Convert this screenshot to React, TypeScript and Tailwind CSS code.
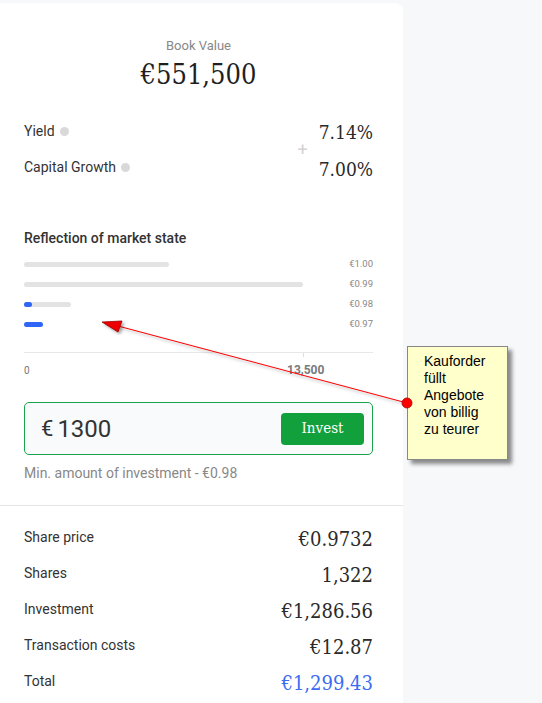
import React from 'react';

const slab = 'font-["DejaVu_Serif_Condensed","DejaVu_Serif",serif]';

const levels = [
  { price: '€1.00', track: 145, fill: 0 },
  { price: '€0.99', track: 279, fill: 0 },
  { price: '€0.98', track: 47, fill: 8 },
  { price: '€0.97', track: 0, fill: 19 },
];

const summary = [
  { label: 'Share price', value: '€0.9732' },
  { label: 'Shares', value: '1,322' },
  { label: 'Investment', value: '€1,286.56' },
  { label: 'Transaction costs', value: '€12.87' },
  { label: 'Total', value: '€1,299.43', blue: true },
];

function Dot() {
  return <span className="ml-[5px] inline-block h-[9px] w-[9px] rounded-full bg-[#d9d9d9]" />;
}

export default function App() {
  return (
    <div className='relative min-h-screen bg-[#f7f8fa] pt-[3px] font-["Roboto",sans-serif] text-[#222]'>
      <div className="w-[403px] rounded-tr-lg bg-white">
        <div className="pl-6 pr-[30px] pt-[34px]">
          {/* Book value */}
          <div className="flex flex-col items-center">
            <p className="text-[13px] leading-[18px] text-[#888]">Book Value</p>
            <p className={`${slab} mt-[3px] text-[27px] leading-[34px] text-[#1f1f1f]`}>€551,500</p>
          </div>

          {/* Yield / growth */}
          <div className="mt-[21px] flex justify-between">
            <div className="flex flex-col text-[14px] text-[#333]">
              <div className="flex h-9 items-center">Yield<Dot /></div>
              <div className="flex h-9 items-center">Capital Growth<Dot /></div>
            </div>
            <div className="flex items-center">
              <span className="mr-[11px] pt-[2px] text-[18px] leading-none text-[#d4d4d4]">+</span>
              <div className={`${slab} flex flex-col items-end text-[19px] text-[#2a2a2a]`}>
                <div className="flex h-9 items-center pt-[2px]">7.14%</div>
                <div className="flex h-9 items-center pt-[4px]">7.00%</div>
              </div>
            </div>
          </div>

          {/* Market state */}
          <h2 className="mt-[43px] text-[14px] font-medium leading-5 text-[#333]">Reflection of market state</h2>
          <div className="mt-[6px] flex flex-col">
            {levels.map((l) => (
              <div key={l.price} className="flex h-5 items-center justify-between">
                <div className="relative h-[5px] w-[279px]">
                  {l.track > 0 && (
                    <div className="absolute left-0 top-0 h-[5px] rounded-full bg-[#e3e3e3]" style={{ width: l.track }} />
                  )}
                  {l.fill > 0 && (
                    <div className="absolute left-0 top-0 h-[5px] rounded-full bg-[#2f66f5]" style={{ width: l.fill }} />
                  )}
                </div>
                <span className="text-[9.5px] text-[#888]">{l.price}</span>
              </div>
            ))}
          </div>
          <div className="mt-[18px] h-px bg-[#e8e8e8]" />
          <div className="relative h-[28px]">
            <div className="absolute left-[279px] top-0 h-[4px] w-px bg-[#e0e0e0]" />
            <span className="absolute left-0 top-[11px] text-[10px] leading-[14px] text-[#777]">0</span>
            <span className="absolute left-[263px] top-[10px] text-[12px] font-bold leading-[14px] text-[#7a7a7a]">13,500</span>
          </div>

          {/* Invest input */}
          <div className="mt-[21px] flex h-[53px] items-center justify-between rounded-[5px] border border-[#1aa34a] bg-[#f9fafc] pl-4 pr-2">
            <div className="flex items-center text-[24px] text-[#333]">
              <span className="mr-[4px] text-[22px]">€</span>1300
            </div>
            <button className={`${slab} h-8 w-[83px] rounded-[4px] bg-[#12a03c] text-[15px] text-white`}>Invest</button>
          </div>
          <p className="mt-[8px] text-[14px] leading-5 text-[#888]">Min. amount of investment - €0.98</p>
        </div>

        <div className="mt-[22px] h-px bg-[#e5e5e5]" />

        {/* Summary */}
        <div className="pb-[4px] pl-6 pr-[30px] pt-[13px]">
          {summary.map((r) => (
            <div key={r.label} className="flex h-9 items-center justify-between">
              <span className="text-[14px] text-[#333]">{r.label}</span>
              <span className={`${slab} pt-[3px] text-[20px] ${r.blue ? 'text-[#3b6cf2]' : 'text-[#2a2a2a]'}`}>{r.value}</span>
            </div>
          ))}
        </div>
      </div>

      {/* annotation arrow */}
      <svg className="pointer-events-none absolute left-0 top-0" width="542" height="703">
        <defs>
          <filter id="sh" x="-20%" y="-20%" width="140%" height="140%">
            <feDropShadow dx="2" dy="2" stdDeviation="1.5" floodColor="#000" floodOpacity="0.35" />
          </filter>
        </defs>
        <line x1="118" y1="326" x2="407" y2="403" stroke="#ff0000" strokeWidth="1" filter="url(#sh)" />
        <polygon points="102,322 122,321 118,332" fill="#ee0000" stroke="#990000" strokeWidth="0.8" filter="url(#sh)" />
      </svg>

      {/* sticky note */}
      <div className='absolute left-[407px] top-[346px] h-[114px] w-[101px] border border-[#888] bg-[#ffffcc] pl-[16px] pt-[6px] font-["Liberation_Sans",Arial,sans-serif] text-[14px] leading-[17px] text-black shadow-[4px_4px_4px_rgba(0,0,0,0.45)]'>
        Kauforder<br />füllt<br />Angebote<br />von billig<br />zu teurer
      </div>
      <svg className="pointer-events-none absolute left-0 top-0" width="542" height="703">
        <circle cx="407" cy="403" r="5" fill="#ff0000" stroke="#aa0000" strokeWidth="0.8" />
      </svg>
    </div>
  );
}
